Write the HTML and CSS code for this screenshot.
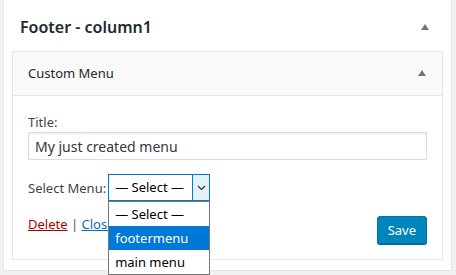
FILE: index.html
```html
<!DOCTYPE html>
<html lang="en">

<head>
    <meta charset="UTF-8" />
    <title>Widgets - Footer column1</title>
    <link rel="stylesheet" href="styles.css">
</head>

<body>
    <div class="sidebar">
        <div class="sidebar-head">
            <h2>Footer - column1</h2>
            <svg class="toggle" width="8" height="6" viewBox="0 0 8 6"><polygon points="4,0 8,6 0,6" /></svg>
        </div>

        <div class="widget">
            <div class="widget-head">
                <h3>Custom Menu</h3>
                <svg class="toggle" width="8" height="6" viewBox="0 0 8 6"><polygon points="4,0 8,6 0,6" /></svg>
            </div>

            <div class="widget-body">
                <label class="field-label" for="title">Title:</label>
                <input type="text" id="title" class="text-input" value="My just created menu" />

                <div class="select-row">
                    <span class="field-label">Select Menu:</span>
                    <div class="fake-select">
                        <span class="current">— Select —</span>
                        <span class="drop-btn">
                            <svg width="9" height="6" viewBox="0 0 9 6"><polyline points="1,1 4.5,4.5 8,1" /></svg>
                        </span>
                        <ul class="options">
                            <li>— Select —</li>
                            <li class="hover">footermenu</li>
                            <li>main menu</li>
                        </ul>
                    </div>
                </div>

                <div class="actions">
                    <div class="links">
                        <a href="#" class="delete">Delete</a> | <a href="#" class="close">Close</a>
                    </div>
                    <button type="button" class="save">Save</button>
                </div>
            </div>
        </div>
    </div>
</body>

</html>
```

FILE: styles.css
```css
/* Reset & base */
* {
    margin: 0;
    padding: 0;
    box-sizing: border-box;
}

body {
    background: #f1f1f1;
    color: #23282d;
    font-family: 'Noto Sans', 'Open Sans', sans-serif;
    font-size: 13px;
}

/* Sidebar panel */
.sidebar {
    margin: 0 4px 5px 3px;
    background: #fff;
    border: 1px solid #e5e5e5;
    border-top: none;
    padding-bottom: 10px;
}

.sidebar-head {
    display: flex;
    align-items: center;
    justify-content: space-between;
    height: 51px;
    padding: 3px 22px 0 16px;
}

.sidebar-head h2 {
    font-size: 16px;
    font-weight: 600;
    color: #23282d;
}

.toggle polygon {
    fill: #72777c;
}

/* Widget */
.widget {
    margin: 0 8px 0 8px;
    border: 1px solid #e5e5e5;
}

.widget-head {
    display: flex;
    align-items: center;
    justify-content: space-between;
    height: 44px;
    padding: 0 16px 2px 15px;
    background: #f9f9f9;
    border-bottom: 1px solid #e5e5e5;
}

.widget-head h3 {
    font-size: 13px;
    font-weight: 400;
}

.widget-body {
    padding: 16px 15px 15px;
}

.field-label {
    display: block;
    line-height: 20px;
    color: #444;
}

.text-input {
    display: block;
    width: 100%;
    height: 28px;
    padding: 0 6px;
    border: 1px solid #ddd;
    box-shadow: inset 0 1px 2px rgba(0, 0, 0, 0.07);
    font-family: inherit;
    font-size: 14px;
    color: #32373c;
}

/* Select row */
.select-row {
    display: flex;
    align-items: center;
    gap: 2px;
    margin-top: 14px;
}

.fake-select {
    position: relative;
    display: flex;
    align-items: stretch;
    width: 102px;
    height: 27px;
    border: 1px solid #0078d7;
    background: #fff;
}

.fake-select .current {
    flex: 1;
    padding-left: 6px;
    line-height: 25px;
    font-size: 13px;
    color: #000;
}

.drop-btn {
    display: flex;
    align-items: center;
    justify-content: center;
    width: 17px;
    background: #e5f1fb;
    border-left: 1px solid #0078d7;
}

.drop-btn polyline {
    fill: none;
    stroke: #333;
    stroke-width: 1.2;
}

.options {
    position: absolute;
    top: 26px;
    left: -1px;
    width: 102px;
    list-style: none;
    background: #fff;
    border: 1px solid #767676;
    z-index: 2;
}

.options li {
    height: 24px;
    line-height: 24px;
    padding-left: 6px;
    color: #000;
}

.options li.hover {
    background: #0078d7;
    color: #fff;
}

/* Actions */
.actions {
    display: flex;
    align-items: flex-start;
    justify-content: space-between;
    margin-top: 15px;
}

.links {
    line-height: 16px;
    color: #555;
}

.links a {
    text-decoration: underline;
}

.links .delete {
    color: #a00;
}

.links .close {
    color: #0073aa;
}

.save {
    height: 28px;
    padding: 0 10px;
    background: #0085ba;
    border: 1px solid #0073aa;
    border-radius: 3px;
    box-shadow: 0 1px 0 #006799;
    color: #fff;
    font-family: inherit;
    font-size: 13px;
}
```
